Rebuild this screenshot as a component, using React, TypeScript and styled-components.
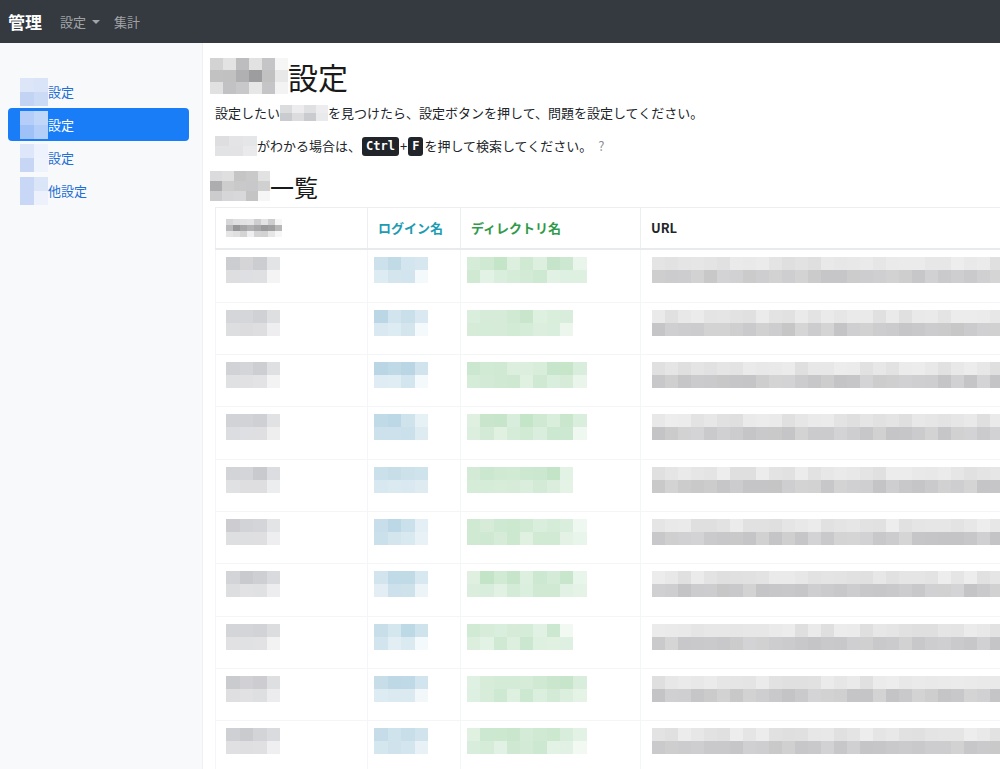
import React from "react";
import styled, { createGlobalStyle } from "styled-components";

const GlobalStyle = createGlobalStyle`
  html, body {
    margin: 0;
    padding: 0;
    background: #fff;
    overflow: hidden;
  }
  body {
    font-family: "Noto Sans CJK JP", "Noto Sans", sans-serif;
    font-size: 13px;
    color: #212529;
  }
`;

type RGB = [number, number, number];
type Palette = { dark: RGB; light: RGB };

const GRAY: Palette = { dark: [140, 140, 142], light: [246, 246, 247] };
const SOFT_GRAY: Palette = { dark: [200, 201, 205], light: [246, 246, 247] };
const URL_GRAY: Palette = { dark: [196, 196, 198], light: [244, 244, 244] };
const BLUE: Palette = { dark: [186, 214, 228], light: [244, 249, 251] };
const GREEN: Palette = { dark: [196, 228, 200], light: [244, 250, 245] };
const SIDE_BLUE: Palette = { dark: [176, 198, 240], light: [238, 243, 252] };
const ACTIVE_BLUE: Palette = { dark: [120, 170, 245], light: [205, 222, 250] };

const rand = (s: number) => {
  const x = Math.sin(s * 12.9898 + 78.233) * 43758.5453;
  return x - Math.floor(x);
};

const mix = (p: Palette, t: number) => {
  const c = p.dark.map((d, i) => Math.round(d + (p.light[i] - d) * t));
  return `rgb(${c[0]}, ${c[1]}, ${c[2]})`;
};

// ---------- mosaic (pixelated redactions) ----------

const MosaicGrid = styled.span<{ $cols: number; $w: number; $h: number }>`
  display: inline-grid;
  grid-template-columns: repeat(${(p) => p.$cols}, ${(p) => p.$w}px);
  grid-auto-rows: ${(p) => p.$h}px;
  vertical-align: middle;
  flex-shrink: 0;
`;

const MosaicCell = styled.span`
  display: block;
`;

type MosaicProps = {
  cols: number;
  rows: number;
  w: number;
  h: number;
  palette: Palette;
  seed: number;
  ranges: [number, number][];
  fadeLast?: boolean;
};

function Mosaic({ cols, rows, w, h, palette, seed, ranges, fadeLast = true }: MosaicProps) {
  const cells = [];
  for (let r = 0; r < rows; r++) {
    const [lo, hi] = ranges[r % ranges.length];
    for (let c = 0; c < cols; c++) {
      let t = lo + (hi - lo) * rand(seed * 97 + r * 31 + c * 7);
      if (fadeLast && c === cols - 1) t = Math.min(1, t + 0.35);
      cells.push(<MosaicCell key={`${r}-${c}`} style={{ background: mix(palette, t) }} />);
    }
  }
  return (
    <MosaicGrid $cols={cols} $w={w} $h={h}>
      {cells}
    </MosaicGrid>
  );
}

// ---------- navbar ----------

const Navbar = styled.nav`
  height: 43px;
  background: #343a40;
  display: flex;
  align-items: center;
  padding: 0 8px;
  gap: 18px;
`;

const Brand = styled.span`
  color: #fff;
  font-size: 17px;
  font-weight: 700;
`;

const NavLinks = styled.div`
  display: flex;
  align-items: center;
  gap: 14px;
`;

const NavLink = styled.span`
  color: rgba(255, 255, 255, 0.55);
  font-size: 13px;
  display: inline-flex;
  align-items: center;
`;

const Caret = styled.span`
  display: inline-block;
  margin-left: 6px;
  border-top: 4px solid rgba(255, 255, 255, 0.55);
  border-left: 4px solid transparent;
  border-right: 4px solid transparent;
`;

// ---------- layout ----------

const Body = styled.div`
  display: flex;
  height: 726px;
`;

const Sidebar = styled.aside`
  width: 203px;
  flex-shrink: 0;
  background: #f8f9fa;
  border-right: 1px solid #eef0f2;
  box-sizing: border-box;
  padding: 32px 13px 0 8px;
  display: flex;
  flex-direction: column;
`;

const SideItem = styled.div<{ $active?: boolean }>`
  height: 33px;
  display: flex;
  align-items: center;
  padding-left: 12px;
  border-radius: 4px;
  background: ${(p) => (p.$active ? "#1a7df8" : "transparent")};
  color: ${(p) => (p.$active ? "#fff" : "#1f6fd6")};
  font-size: 13px;
`;

const Main = styled.main`
  flex: 1;
  overflow: hidden;
  padding-left: 12px;
`;

const TitleRow = styled.h1`
  margin: 14px 0 0 -5px;
  display: flex;
  align-items: center;
  font-size: 30px;
  font-weight: 400;
  height: 38px;
  color: #1a1a1a;
`;

const SubTitle = styled.h2`
  margin: 14px 0 0 -5px;
  display: flex;
  align-items: center;
  font-size: 24px;
  font-weight: 400;
  height: 32px;
  color: #1a1a1a;
`;

const Para = styled.p<{ $top: number }>`
  margin: ${(p) => p.$top}px 0 0;
  line-height: 20px;
  font-size: 13px;
  display: flex;
  align-items: center;
  white-space: nowrap;
`;

const Kbd = styled.kbd`
  display: inline-block;
  background: #212529;
  color: #fff;
  font-family: "DejaVu Sans Mono", "Liberation Mono", monospace;
  font-weight: 700;
  font-size: 12px;
  line-height: 19px;
  padding: 0 4px;
  border-radius: 3px;
  margin: 0 1px;
`;

const Help = styled.span`
  color: #8a9096;
  margin-left: 6px;
`;

// ---------- table ----------

const Table = styled.table`
  margin-top: 5px;
  border-collapse: collapse;
  table-layout: fixed;
  width: 900px;
`;

const Th = styled.th<{ $color: string }>`
  border: 1px solid #eceef0;
  border-bottom: 2px solid #e8eaec;
  padding: 11px 10px;
  height: 16px;
  line-height: 16px;
  text-align: left;
  font-weight: 700;
  font-size: 13px;
  color: ${(p) => p.$color};
`;

const Td = styled.td`
  border: 1px solid #f4f5f6;
  padding: 7px 10px 18.3px;
  vertical-align: top;
  overflow: hidden;
  white-space: nowrap;
`;

const Shift = styled.div<{ $x: number }>`
  margin-left: ${(p) => p.$x}px;
  display: flex;
`;

const navItems = [
  { seed: 1, active: false, label: "設定" },
  { seed: 2, active: true, label: "設定" },
  { seed: 3, active: false, label: "設定" },
  { seed: 4, active: false, label: "他設定" },
];

const rows = Array.from({ length: 10 }, (_, i) => i);

export default function App() {
  return (
    <>
      <GlobalStyle />
      <Navbar>
        <Brand>管理</Brand>
        <NavLinks>
          <NavLink>
            設定
            <Caret />
          </NavLink>
          <NavLink>集計</NavLink>
        </NavLinks>
      </Navbar>
      <Body>
        <Sidebar>
          {navItems.map((item) => (
            <SideItem key={item.seed} $active={item.active}>
              <Mosaic
                cols={2}
                rows={2}
                w={14}
                h={14}
                palette={item.active ? ACTIVE_BLUE : SIDE_BLUE}
                seed={item.seed}
                ranges={[
                  [0.2, 0.8],
                  [0.1, 0.7],
                ]}
              />
              {item.label}
            </SideItem>
          ))}
        </Sidebar>
        <Main>
          <TitleRow>
            <Mosaic
              cols={6}
              rows={3}
              w={13}
              h={12}
              palette={GRAY}
              seed={11}
              ranges={[
                [0.4, 0.85],
                [0.15, 0.65],
                [0.45, 0.9],
              ]}
            />
            設定
          </TitleRow>
          <Para $top={8}>
            設定したい
            <Mosaic
              cols={4}
              rows={2}
              w={12}
              h={8}
              palette={SOFT_GRAY}
              seed={21}
              ranges={[
                [0.4, 0.85],
                [0.0, 0.5],
              ]}
            />
            を見つけたら、設定ボタンを押して、問題を設定してください。
          </Para>
          <Para $top={13}>
            <Mosaic
              cols={3}
              rows={2}
              w={14}
              h={10}
              palette={SOFT_GRAY}
              seed={31}
              ranges={[
                [0.2, 0.7],
                [0.3, 0.8],
              ]}
            />
            がわかる場合は、
            <Kbd>Ctrl</Kbd>+<Kbd>F</Kbd>を押して検索してください。
            <Help>?</Help>
          </Para>
          <SubTitle>
            <Mosaic
              cols={5}
              rows={3}
              w={12}
              h={10}
              palette={GRAY}
              seed={41}
              ranges={[
                [0.4, 0.85],
                [0.15, 0.65],
                [0.45, 0.9],
              ]}
            />
            一覧
          </SubTitle>
          <Table>
            <colgroup>
              <col style={{ width: 152 }} />
              <col style={{ width: 93 }} />
              <col style={{ width: 180 }} />
              <col />
            </colgroup>
            <thead>
              <tr>
                <Th $color="#212529">
                  <Mosaic
                    cols={8}
                    rows={3}
                    w={7}
                    h={6}
                    palette={GRAY}
                    seed={51}
                    ranges={[
                      [0.6, 0.9],
                      [0.05, 0.45],
                      [0.65, 0.95],
                    ]}
                  />
                </Th>
                <Th $color="#1c9bb3">ログイン名</Th>
                <Th $color="#2f9a4a">ディレクトリ名</Th>
                <Th $color="#212529">URL</Th>
              </tr>
            </thead>
            <tbody>
              {rows.map((r) => (
                <tr key={r}>
                  <Td>
                    <Mosaic
                      cols={4}
                      rows={2}
                      w={13.5}
                      h={13}
                      palette={SOFT_GRAY}
                      seed={100 + r}
                      ranges={[
                        [0.0, 0.3],
                        [0.4, 0.6],
                      ]}
                    />
                  </Td>
                  <Td>
                    <Shift $x={-4}>
                      <Mosaic
                        cols={4}
                        rows={2}
                        w={13.5}
                        h={13}
                        palette={BLUE}
                        seed={200 + r}
                        ranges={[
                          [0.0, 0.45],
                          [0.25, 0.7],
                        ]}
                      />
                    </Shift>
                  </Td>
                  <Td>
                    <Shift $x={-4}>
                      <Mosaic
                        cols={r % 3 === 1 ? 8 : 9}
                        rows={2}
                        w={13.3}
                        h={13}
                        palette={GREEN}
                        seed={300 + r}
                        ranges={[
                          [0.0, 0.6],
                          [0.15, 0.65],
                        ]}
                      />
                    </Shift>
                  </Td>
                  <Td>
                    <Shift $x={1}>
                      <Mosaic
                        cols={30}
                        rows={2}
                        w={13}
                        h={13}
                        palette={URL_GRAY}
                        seed={400 + r}
                        fadeLast={false}
                        ranges={[
                          [0.55, 0.85],
                          [0.0, 0.35],
                        ]}
                      />
                    </Shift>
                  </Td>
                </tr>
              ))}
            </tbody>
          </Table>
        </Main>
      </Body>
    </>
  );
}
